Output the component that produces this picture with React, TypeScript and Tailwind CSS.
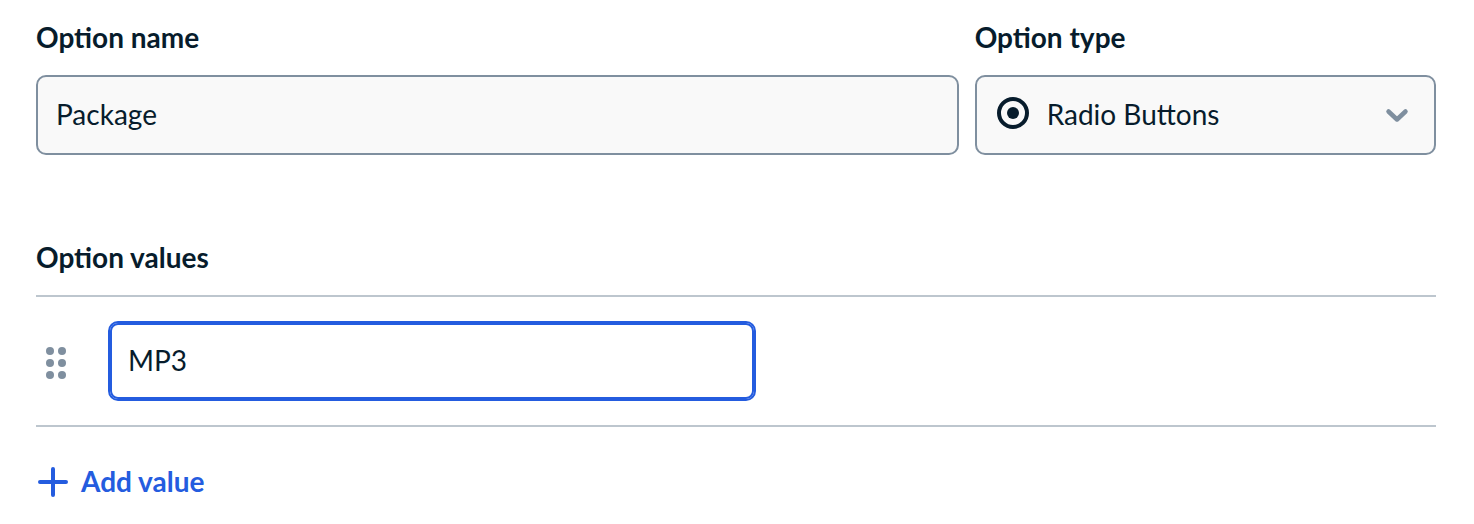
import React, { useState } from 'react';

function RadioIcon() {
  return (
    <svg width="32" height="32" viewBox="0 0 32 32" fill="none" aria-hidden="true">
      <circle cx="16" cy="16" r="14" stroke="currentColor" strokeWidth="4" />
      <circle cx="16" cy="16" r="6" fill="currentColor" />
    </svg>
  );
}

function ChevronIcon() {
  return (
    <svg width="24" height="16" viewBox="0 0 24 16" fill="none" aria-hidden="true">
      <path
        d="M3.5 4.5 12 12.5 20.5 4.5"
        stroke="currentColor"
        strokeWidth="4.5"
        strokeLinecap="round"
        strokeLinejoin="round"
      />
    </svg>
  );
}

function GripIcon() {
  return (
    <svg width="40" height="40" viewBox="0 0 40 40" fill="currentColor" aria-hidden="true">
      <circle cx="14" cy="10" r="4" />
      <circle cx="26" cy="10" r="4" />
      <circle cx="14" cy="22" r="4" />
      <circle cx="26" cy="22" r="4" />
      <circle cx="14" cy="34" r="4" />
      <circle cx="26" cy="34" r="4" />
    </svg>
  );
}

function PlusIcon() {
  return (
    <svg width="33" height="36" viewBox="0 0 33 36" fill="none" aria-hidden="true">
      <path d="M17 6v26M4 19h26" stroke="currentColor" strokeWidth="4" strokeLinecap="round" />
    </svg>
  );
}

export default function App() {
  const [name, setName] = useState('Package');
  const [type, setType] = useState('radio');
  const [values, setValues] = useState(['MP3']);

  const updateValue = (index: number, next: string) => {
    setValues(values.map((value, i) => (i === index ? next : value)));
  };

  return (
    <form className="bg-white pt-[19px] pr-[38px] pb-5 pl-9 font-['Lato',sans-serif] text-[28px] leading-9 text-[#071c2c]">
      {/* Name and type */}
      <div className="grid grid-cols-[2fr_1fr] gap-4">
        <div className="flex flex-col gap-5">
          <label htmlFor="option-name" className="font-bold">
            Option name
          </label>
          <input
            id="option-name"
            type="text"
            value={name}
            onChange={(e) => setName(e.target.value)}
            className="h-20 w-full rounded-[10px] border-2 border-[#7f8f9f] bg-[#f9f9f9] px-[18px] pb-0.5 outline-none"
          />
        </div>

        <div className="flex flex-col gap-5">
          <label htmlFor="option-type" className="font-bold">
            Option type
          </label>
          <div className="relative">
            <select
              id="option-type"
              value={type}
              onChange={(e) => setType(e.target.value)}
              className="h-20 w-full appearance-none rounded-[10px] border-2 border-[#7f8f9f] bg-[#f9f9f9] pr-16 pb-0.5 pl-[70px] outline-none"
            >
              <option value="radio">Radio Buttons</option>
            </select>
            <span className="pointer-events-none absolute top-[22px] left-[22px]">
              <RadioIcon />
            </span>
            <span className="pointer-events-none absolute inset-y-0 right-[27px] flex items-center text-[#7f8f9f]">
              <ChevronIcon />
            </span>
          </div>
        </div>
      </div>

      {/* Values */}
      <h2 className="mt-[84px] mb-5 font-bold">Option values</h2>
      <ul className="border-t-2 border-[#bdc6ce]">
        {values.map((value, index) => (
          <li key={index} className="flex items-center gap-8 border-b-2 border-[#bdc6ce] py-6">
            <button type="button" aria-label="Reorder value" className="cursor-grab text-[#7f8f9f]">
              <GripIcon />
            </button>
            <input
              type="text"
              aria-label="Option value"
              value={value}
              onChange={(e) => updateValue(index, e.target.value)}
              className="h-20 max-w-[648px] min-w-0 flex-1 rounded-[10px] border-2 border-[#245cdf] bg-white px-[18px] pb-0.5 shadow-[inset_0_0_0_2px_#245cdf] outline-none"
            />
          </li>
        ))}
      </ul>

      <button
        type="button"
        onClick={() => setValues([...values, ''])}
        className="mt-9 flex items-center gap-3 font-bold text-[#245cdf]"
      >
        <PlusIcon />
        Add value
      </button>
    </form>
  );
}
